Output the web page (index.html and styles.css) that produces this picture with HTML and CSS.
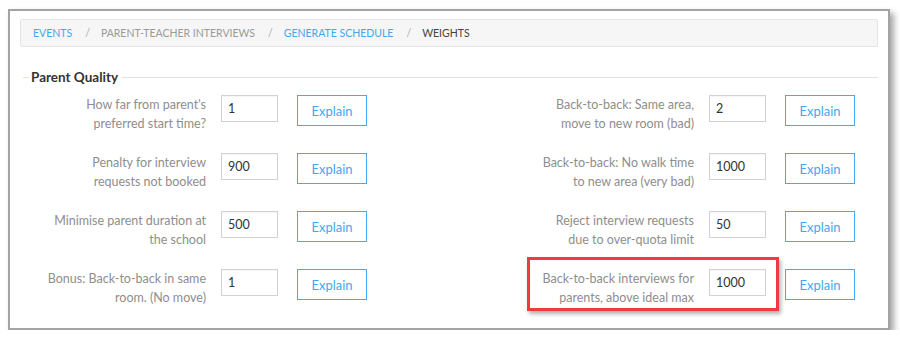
FILE: index.html
```html
<!DOCTYPE html>
<html>
<head>
<meta charset="utf-8">
<link rel="stylesheet" href="styles.css">
</head>
<body>
<div class="page">
  <div class="frame">
    <nav class="crumbs">
      <a class="crumb link">Events</a><span class="sep">/</span>
      <span class="crumb muted">Parent-Teacher Interviews</span><span class="sep">/</span>
      <a class="crumb link">Generate Schedule</a><span class="sep">/</span>
      <span class="crumb current">Weights</span>
    </nav>
    <section class="fieldset">
      <div class="legend"><span class="legend-line short"></span><span class="legend-text">Parent Quality</span><span class="legend-line"></span></div>
      <div class="grid">
        <div class="cell">
          <label class="label">How far from parent's<br>preferred start time?</label>
          <input class="num" value="1">
          <button class="btn">Explain</button>
        </div>
        <div class="cell">
          <label class="label">Back-to-back: Same area,<br>move to new room (bad)</label>
          <input class="num" value="2">
          <button class="btn">Explain</button>
        </div>
        <div class="cell">
          <label class="label">Penalty for interview<br>requests not booked</label>
          <input class="num" value="900">
          <button class="btn">Explain</button>
        </div>
        <div class="cell">
          <label class="label">Back-to-back: No walk time<br>to new area (very bad)</label>
          <input class="num" value="1000">
          <button class="btn">Explain</button>
        </div>
        <div class="cell">
          <label class="label">Minimise parent duration at<br>the school</label>
          <input class="num" value="500">
          <button class="btn">Explain</button>
        </div>
        <div class="cell">
          <label class="label">Reject interview requests<br>due to over-quota limit</label>
          <input class="num" value="50">
          <button class="btn">Explain</button>
        </div>
        <div class="cell">
          <label class="label">Bonus: Back-to-back in same<br>room. (No move)</label>
          <input class="num" value="1">
          <button class="btn">Explain</button>
        </div>
        <div class="cell highlighted">
          <label class="label">Back-to-back interviews for<br>parents, above ideal max</label>
          <input class="num" value="1000">
          <button class="btn">Explain</button>
          <div class="callout"></div>
        </div>
      </div>
    </section>
  </div>
</div>
</body>
</html>
```

FILE: styles.css
```css
* { box-sizing: border-box; }
html, body { margin: 0; padding: 0; background: #fff; }
body { font-family: Lato, "Open Sans", "Liberation Sans", sans-serif; }

.page { padding: 9px 0 0 8px; }

.frame {
  width: 882px;
  height: 321px;
  border: 2px solid #a3a3a3;
  background: #fff;
  padding: 8px 10px 0 10px;
  box-shadow: 4px 4px 6px rgba(0,0,0,0.35);
}

.crumbs {
  height: 28px;
  background: #f6f6f6;
  border: 1px solid #e4e4e4;
  border-radius: 2px;
  padding-left: 12px;
  display: flex;
  align-items: center;
  font-size: 10.5px;
  text-transform: uppercase;
}
.crumb { white-space: nowrap; }
.link { color: #45a6ee; }
.muted { color: #9a9a9a; }
.current { color: #444; }
.sep { color: #aaa; margin: 0 11px 0 13px; }

.fieldset { margin: 22px 0 0 3px; }
.legend {
  height: 16px;
  display: flex;
  align-items: center;
  gap: 2px;
}
.legend-line { flex: 1; height: 1px; background: #e2e2e2; }
.legend-line.short { flex: 0 0 6px; }
.legend-text {
  font-size: 13.5px;
  font-weight: 700;
  color: #333;
  padding-right: 2px;
}

.grid {
  margin-top: 10px;
  padding-left: 1px;
  display: grid;
  grid-template-columns: 488px 1fr;
  row-gap: 20px;
}
.cell {
  display: flex;
  align-items: flex-start;
  position: relative;
}
.label {
  width: 182px;
  text-align: right;
  font-size: 12.5px;
  line-height: 19px;
  color: #8e8e8e;
  margin-right: 15px;
}
.num {
  width: 57px;
  height: 27px;
  border: 1px solid #d2d2d2;
  padding: 0 0 0 6px;
  font-family: inherit;
  font-size: 12.5px;
  color: #333;
  margin: 0 19px 0 0;
  box-shadow: inset 0 1px 1px rgba(0,0,0,0.04);
}
.btn {
  width: 70px;
  height: 31px;
  border: 1px solid #4aa8ee;
  background: #fff;
  color: #45a6ee;
  font-family: inherit;
  font-size: 13px;
  padding: 0;
  margin: 0;
}

.callout {
  position: absolute;
  left: 15px;
  top: -12px;
  width: 252px;
  height: 54px;
  border: 3px solid #f2393f;
  box-shadow: 2px 3px 4px rgba(0,0,0,0.3);
  pointer-events: none;
}
```
